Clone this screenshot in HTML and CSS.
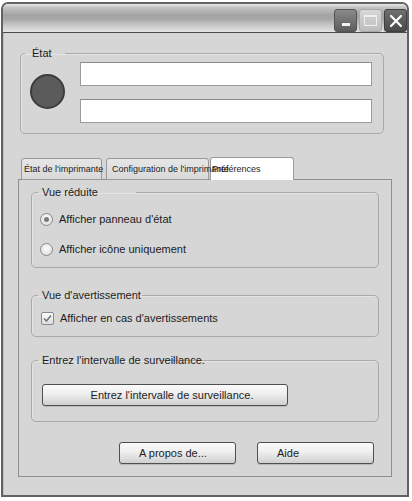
FILE: index.html
```html
<!DOCTYPE html>
<html lang="fr">
<head>
<meta charset="utf-8">
<link rel="stylesheet" href="styles.css">
</head>
<body>
<div class="window">
  <div class="titlebar">
    <span class="wbtn wbtn-min"><span class="min-bar"></span></span>
    <span class="wbtn wbtn-max"><span class="max-box"></span></span>
    <span class="wbtn wbtn-close">
      <svg width="14" height="14" viewBox="0 0 14 14"><path d="M2 2 L12 12 M12 2 L2 12" stroke="#fff" stroke-width="2.2" stroke-linecap="round" fill="none"/></svg>
    </span>
  </div>
  <div class="client">
    <fieldset class="group group-state">
      <legend class="lg lg-state">État</legend>
      <div class="state-body">
        <div class="led"></div>
        <div class="fields">
          <div class="field"></div>
          <div class="field"></div>
        </div>
      </div>
    </fieldset>

    <div class="tabs">
      <div class="tab tab-1">État de l'imprimante</div>
      <div class="tab tab-2"><span class="tab-label">Configuration de l'imprimante</span></div>
      <div class="tab tab-3">Préférences</div>
    </div>

    <div class="panel">
      <fieldset class="group">
        <legend class="lg lg-reduced">Vue réduite</legend>
        <div class="group-body body-reduced">
          <div class="opt"><span class="radio radio-on"></span>Afficher panneau d'état</div>
          <div class="opt"><span class="radio"></span>Afficher icône uniquement</div>
        </div>
      </fieldset>

      <fieldset class="group group-warn">
        <legend class="lg lg-warn">Vue d'avertissement</legend>
        <div class="group-body body-warn">
          <div class="opt"><span class="check"><svg width="11" height="11" viewBox="0 0 11 11"><path d="M2 5.5 L4.5 8 L9 2.5" stroke="#777" stroke-width="1.6" fill="none"/></svg></span>Afficher en cas d'avertissements</div>
        </div>
      </fieldset>

      <fieldset class="group group-interval">
        <legend class="lg lg-interval">Entrez l'intervalle de surveillance.</legend>
        <div class="group-body body-interval">
          <div class="btn btn-interval">Entrez l'intervalle de surveillance.</div>
        </div>
      </fieldset>

      <div class="footer">
        <div class="btn btn-foot">A propos de...</div>
        <div class="btn btn-foot">Aide</div>
      </div>
    </div>
  </div>
</div>
</body>
</html>
```

FILE: styles.css
```css
* { box-sizing: border-box; }

html, body {
  margin: 0;
  padding: 0;
  background: #ffffff;
}

body {
  font-family: "Liberation Sans", Arial, sans-serif;
  font-size: 11px;
  color: #1c1c1c;
}

.window {
  margin: 2px 0 0 1px;
  width: 408px;
  height: 495px;
  border: 2px solid #626262;
  border-radius: 7px 7px 0 0;
  display: flex;
  flex-direction: column;
  background: #d6d6d6;
  overflow: hidden;
}

.titlebar {
  height: 29px;
  flex: none;
  border-bottom: 1px solid #4a4a4a;
  background: linear-gradient(#e9e9e9 0%, #c4c4c4 12%, #a3a3a3 40%, #a9a9a9 55%, #cdcdcd 80%, #e4e4e4 100%);
  display: flex;
  justify-content: flex-end;
  align-items: flex-end;
  gap: 2px;
  padding: 0 0 0 0;
}

.wbtn {
  width: 23px;
  height: 23px;
  border-radius: 3px;
  display: flex;
  align-items: center;
  justify-content: center;
}

.wbtn-min {
  background: linear-gradient(#8a8a8a, #5c5c5c);
  border: 1px solid #555;
  align-items: flex-end;
  padding-bottom: 5px;
}

.min-bar {
  width: 8px;
  height: 3px;
  background: #f2f2f2;
}

.wbtn-max {
  background: linear-gradient(#d8d8d8, #bcbcbc);
  border: 1px solid #a8a8a8;
}

.max-box {
  width: 13px;
  height: 11px;
  border: 1px solid #efefef;
  border-top-width: 2px;
  box-shadow: inset 0 0 0 1px #c9c9c9;
}

.wbtn-close {
  background: linear-gradient(#707070, #4a4a4a);
  border: 1px solid #3e3e3e;
}

.client {
  flex: 1;
  padding: 0 15px 0 14px;
  background: #d6d6d6;
  border-left: 1px solid #bdbdbd;
}

/* group boxes */
.group {
  margin: 0;
  padding: 0;
  min-width: 0;
  border: 1px solid #a9a9a9;
  border-radius: 5px;
  box-shadow: inset 1px 1px 0 #e4e4e4;
}

.lg {
  padding: 0 0 0 4px;
  margin-left: 6px;
  line-height: 14px;
  height: 14px;
  white-space: nowrap;
}

.group-state {
  margin: 13px 8px 0 2px;
}

.lg-state {
  margin-left: 4px;
  padding-left: 7px;
  width: 40px;
}

.state-body {
  display: flex;
  align-items: center;
  padding: 2px 11px 10px 9px;
}

.led {
  width: 35px;
  height: 35px;
  border-radius: 50%;
  background: #5b5b5b;
  border: 2px solid #3c3c3c;
  margin: 0 15px 3px 0;
  flex: none;
}

.fields {
  flex: 1;
  display: flex;
  flex-direction: column;
  gap: 13px;
}

.field {
  height: 24px;
  background: #ffffff;
  border: 1px solid #9c9c9c;
  border-top-color: #8a8a8a;
}

/* tabs */
.tabs {
  display: flex;
  align-items: flex-end;
  height: 23px;
  margin: 23px 0 0 3px;
  font-size: 9px;
}

.tab {
  position: relative;
  height: 22px;
  line-height: 21px;
  border: 1px solid #9a9a9a;
  border-radius: 3px 3px 0 0;
  background: linear-gradient(#e6e6e6, #d9d9d9);
  white-space: nowrap;
}

.tab-1 {
  width: 81px;
  margin-right: 4px;
  padding-left: 2px;
}

.tab-2 {
  width: 103px;
  margin-right: 1px;
  padding-left: 5px;
}

.tab-label {
  position: relative;
  z-index: 2;
}

.tab-3 {
  width: 84px;
  height: 23px;
  line-height: 22px;
  padding-left: 1px;
  background: #ffffff;
  border-bottom: none;
}

.panel {
  margin-top: -1px;
  border: 1px solid #8e8e8e;
  padding: 5px 12px 12px 12px;
  background: #d6d6d6;
}

.group-body {
  padding-left: 8px;
}

.body-reduced {
  padding-top: 10px;
  padding-bottom: 8px;
  display: flex;
  flex-direction: column;
  gap: 10px;
}

.opt {
  height: 20px;
  display: flex;
  align-items: center;
  gap: 6px;
}

.radio {
  width: 13px;
  height: 13px;
  border-radius: 50%;
  border: 1px solid #8a8a8a;
  background: radial-gradient(circle at 50% 40%, #fdfdfd, #d8d8d8);
  display: flex;
  align-items: center;
  justify-content: center;
  flex: none;
}

.radio-on::after {
  content: "";
  width: 5px;
  height: 5px;
  border-radius: 50%;
  background: #7a7a7a;
}

.group-warn {
  margin-top: 20px;
}

.lg-reduced { width: 98px; }
.lg-warn { width: 104px; }
.lg-interval { width: 121px; }

.body-warn {
  padding-top: 6px;
  padding-bottom: 8px;
  padding-left: 9px;
}

.check {
  width: 13px;
  height: 13px;
  border: 1px solid #8a8a8a;
  border-radius: 2px;
  background: linear-gradient(#fbfbfb, #dedede);
  display: flex;
  align-items: center;
  justify-content: center;
  flex: none;
}

.group-interval {
  margin-top: 16px;
}

.body-interval {
  padding: 17px 0 15px 10px;
}

.btn {
  height: 22px;
  line-height: 20px;
  border: 1px solid #4f4f4f;
  border-radius: 3px;
  background: linear-gradient(#fbfbfb 0%, #eeeeee 45%, #d0d0d0 100%);
  box-shadow: 0 1px 0 #b8b8b8;
  white-space: nowrap;
}

.btn-interval {
  width: 246px;
  text-align: center;
  padding-left: 14px;
}

.footer {
  margin-top: 20px;
  display: flex;
  justify-content: flex-end;
  gap: 21px;
  padding-right: 5px;
}

.btn-foot {
  width: 117px;
  padding-left: 19px;
}
```
